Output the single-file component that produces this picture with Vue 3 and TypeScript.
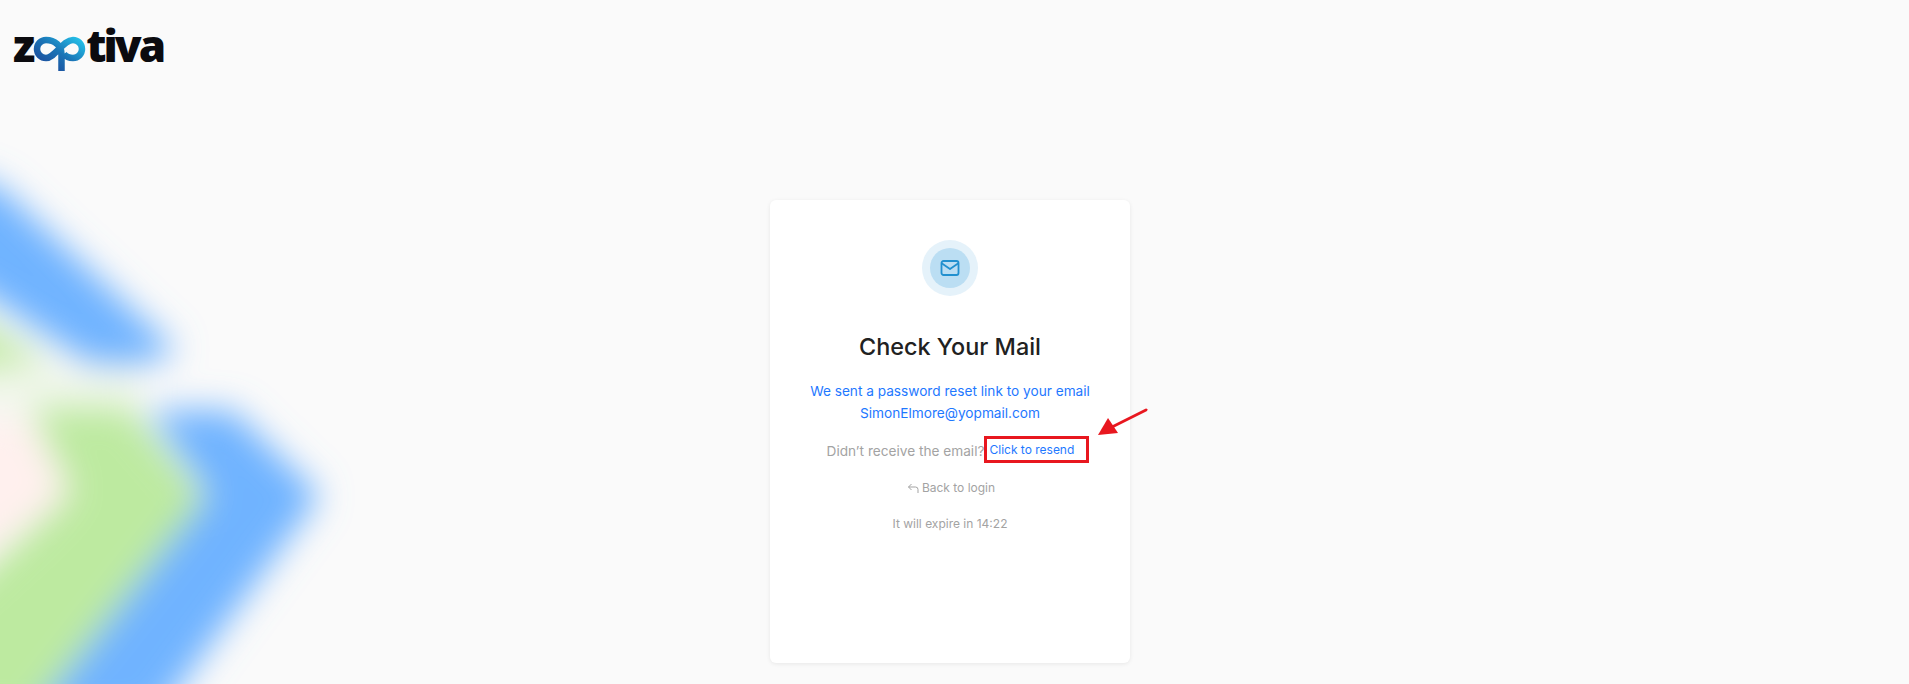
<template>
  <div class="page">
    <svg class="backdrop" width="380" height="684" viewBox="0 0 380 684" aria-hidden="true">
      <defs>
        <filter id="soft" x="-30%" y="-30%" width="160%" height="160%">
          <feGaussianBlur stdDeviation="17" />
        </filter>
      </defs>
      <g filter="url(#soft)">
        <path d="M-40 365 H140 V410 H-40 Z" fill="#d9efc8" opacity="0.3" />
        <path d="M-60 420 L28 420 L68 493 L-60 590 Z" fill="#fff0ee" />
        <path d="M-60 295 L50 362 L-60 372 Z" fill="#c4eaa8" />
        <path d="M30 408 L130 408 L203 495 L95 720 L-60 720 L-60 610 L70 493 Z" fill="#bdeaa0" />
        <path d="M-60 165 L0 187 L176 350 L150 364 L90 364 L-60 265 Z" fill="#70b3ff" />
        <path d="M148 410 L232 410 L320 495 L155 720 L30 720 L208 495 Z" fill="#70b3ff" />
      </g>
    </svg>

    <header class="topbar">
      <div class="logo" aria-label="zaptiva">
        <span>z</span>
        <svg class="logo-mark" width="56" height="38" viewBox="0 0 56 38" fill="none" aria-hidden="true">
          <defs>
            <linearGradient id="mark" x1="0" y1="1" x2="1" y2="0">
              <stop offset="0" stop-color="#1d3d92" />
              <stop offset="0.55" stop-color="#1a74b6" />
              <stop offset="1" stop-color="#24c0e8" />
            </linearGradient>
          </defs>
          <path
            d="M28.5 37 V20 C28.5 12 22 6 13 6 A9 9 0 0 0 13 24 C22 24 30 6 40 6 A9 9 0 1 1 40 24 C36 24 33 22.5 31 20"
            stroke="url(#mark)"
            stroke-width="6.5"
          />
        </svg>
        <span>tiva</span>
      </div>
    </header>

    <main class="center">
      <section class="card">
        <div class="icon-ring">
          <div class="icon-disc">
            <svg width="20" height="20" viewBox="0 0 20 20" fill="none" stroke="#2190cf" stroke-width="1.8" stroke-linejoin="round" stroke-linecap="round">
              <rect x="1.5" y="3" width="17" height="14" rx="2" />
              <path d="M2 5.5 L10 11 L18 5.5" />
            </svg>
          </div>
        </div>

        <h1>Check Your Mail</h1>

        <p class="sent">
          We sent a password reset link to your email<br />
          {{ email }}
        </p>

        <div class="resend">
          <span class="resend-label">Didn’t receive the email?</span>
          <a class="resend-link" href="#" @click.prevent>Click to resend</a>
          <svg class="arrow" width="60" height="36" viewBox="0 0 60 36" aria-hidden="true">
            <path d="M48 7 L14 24" stroke="#e8171f" stroke-width="2.8" stroke-linecap="round" />
            <path d="M0 32 L20 30 L10 15 Z" fill="#e8171f" />
          </svg>
        </div>

        <a class="back" href="#" @click.prevent>
          <svg width="12" height="12" viewBox="0 0 12 12" fill="none" stroke="#a3a3a3" stroke-width="1">
            <path d="M4.5 2 L1.5 5 L4.5 8" />
            <path d="M1.5 5 H8.5 Q11 5 11 7.5 V11" />
          </svg>
          Back to login
        </a>

        <p class="expire">It will expire in {{ timeLeft }}</p>
      </section>
    </main>
  </div>
</template>

<script setup lang="ts">
import { ref } from "vue";

const email = ref("SimonElmore@yopmail.com");
const timeLeft = ref("14:22");
</script>

<style>
html,
body {
  margin: 0;
  background: #fafafa;
}
</style>

<style scoped>
.page {
  position: relative;
  height: 684px;
  overflow: hidden;
  background: #fafafa;
  font-family: Inter, "Liberation Sans", sans-serif;
  color: #a3a3a3;
}
.backdrop {
  position: absolute;
  left: 0;
  top: 0;
}
.topbar {
  position: relative;
  height: 200px;
  padding: 16px 0 0 13px;
  box-sizing: border-box;
}
.logo {
  display: flex;
  align-items: flex-start;
  font-family: "Open Sans", sans-serif;
  font-weight: 800;
  font-size: 44px;
  line-height: 58px;
  letter-spacing: -3px;
  color: #0b0b0f;
}
.logo-mark {
  margin: 18px -3px 0 1px;
  flex: none;
}
.center {
  position: relative;
  display: flex;
  justify-content: center;
  padding-right: 9px;
}
.card {
  width: 360px;
  height: 463px;
  box-sizing: border-box;
  padding-top: 40px;
  background: #fff;
  border-radius: 6px;
  box-shadow: 0 1px 4px rgba(0, 0, 0, 0.08);
  display: flex;
  flex-direction: column;
  align-items: center;
}
.icon-ring {
  width: 56px;
  height: 56px;
  border-radius: 50%;
  background: #e5f2fa;
  display: flex;
  align-items: center;
  justify-content: center;
}
.icon-disc {
  width: 40px;
  height: 40px;
  border-radius: 50%;
  background: #bbdef3;
  display: flex;
  align-items: center;
  justify-content: center;
}
h1 {
  margin: 35px 0 0;
  font-size: 23.4px;
  line-height: 32px;
  font-weight: 500;
  color: #212121;
}
.sent {
  margin: 17px 0 0;
  font-size: 13.65px;
  line-height: 22px;
  text-align: center;
  color: #1e78ff;
}
.resend {
  position: relative;
  margin-top: 12px;
  margin-left: 16px;
  display: flex;
  align-items: center;
  font-size: 13.65px;
  line-height: 22px;
}
.resend-label {
  padding-top: 2px;
}
.resend-link {
  width: 105px;
  height: 27px;
  box-sizing: border-box;
  border: 3px solid #e8171f;
  padding-left: 2px;
  font-size: 12px;
  line-height: 22px;
  color: #1e78ff;
  text-decoration: none;
}
.arrow {
  position: absolute;
  right: -69px;
  top: -33px;
}
.back {
  margin-top: 15px;
  margin-left: 2px;
  display: flex;
  align-items: center;
  gap: 3px;
  font-size: 12px;
  line-height: 20px;
  color: #a3a3a3;
  text-decoration: none;
}
.expire {
  margin: 16px 0 0;
  font-size: 12px;
  line-height: 20px;
}
</style>
